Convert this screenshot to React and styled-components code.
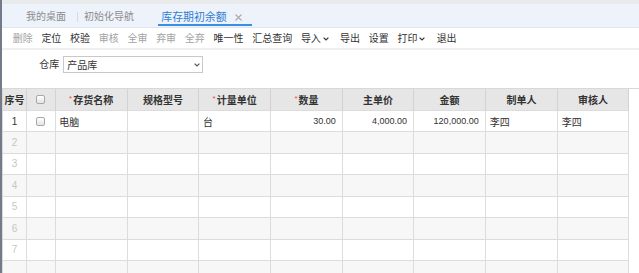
import React from "react";
import styled, { createGlobalStyle } from "styled-components";

const GlobalStyle = createGlobalStyle`
  html, body { margin: 0; padding: 0; height: 100%; overflow: hidden; background: #fff; }
  body { font-family: "Liberation Sans", "Noto Sans CJK SC", sans-serif; font-size: 10px; color: #333; }
  * { box-sizing: border-box; }
`;

const Page = styled.div`
  height: 273px;
  border-left: 2px solid #737b89;
  display: flex;
  flex-direction: column;
  overflow: hidden;
`;

const TopStrip = styled.div`
  height: 4px;
  background: #e9eaec;
  flex: none;
`;

const TabBar = styled.div`
  height: 24px;
  flex: none;
  background: #eef3fb;
  border-bottom: 1px solid #dfe6f0;
  display: flex;
  align-items: flex-start;
  padding-left: 24px;
`;

const Tab = styled.div`
  height: 22px;
  display: flex;
  align-items: center;
  padding: 6px ${(p) => (p.$active ? "9.4px" : "0")} 0 ${(p) => (p.$active ? "3.6px" : "0")};
  margin-left: ${(p) => p.$ml || 0}px;
  border-bottom: 2px solid ${(p) => (p.$active ? "#3a8ee6" : "transparent")};
  color: ${(p) => (p.$active ? "#2f7fd2" : "#8c8c8c")};
  font-size: ${(p) => (p.$active ? "10.9px" : "10px")};
  line-height: 14px;
  white-space: nowrap;
`;

const TabSep = styled.div`
  width: 1px;
  height: 10px;
  margin: 8px 6px 0 11px;
  background: #d5dbe4;
`;

const CloseIcon = styled.svg`
  width: 7px;
  height: 7px;
  margin-left: 8.5px;
`;

const Toolbar = styled.div`
  height: 22px;
  flex: none;
  display: flex;
  align-items: center;
  gap: 8.7px;
  padding-left: 10.7px;
  padding-top: 1px;
  border-bottom: 2px solid #efefef;
`;

const ToolItem = styled.span`
  display: inline-flex;
  align-items: center;
  color: ${(p) => (p.$disabled ? "#a3a3a3" : "#333")};
  font-size: 10px;
  line-height: 14px;
  white-space: nowrap;
  margin-right: ${(p) => (p.$menu ? "2.5px" : "0")};
`;

const Chevron = styled.svg`
  width: 6px;
  height: 4px;
  margin-left: 2px;
`;

const FormRow = styled.div`
  height: 38px;
  flex: none;
  display: flex;
  align-items: flex-start;
  padding: 6px 0 0 37.3px;
`;

const Label = styled.span`
  font-size: 10px;
  line-height: 17px;
  color: #333;
  margin-right: 4px;
`;

const Select = styled.div`
  width: 140px;
  height: 17px;
  border: 1px solid #c9c9c9;
  display: flex;
  align-items: center;
  justify-content: space-between;
  padding: 0 2.5px 0 3px;
  font-size: 10px;
  color: #333;
  background: #fff;
`;

const TableArea = styled.div`
  flex: 1;
  border-top: 1px solid #d8d8d8;
  overflow: hidden;
`;

const cols = "24px 28.6px 72px 71.7px 71.7px 72px 71.3px 71.7px 72px 71.3px";

const Grid = styled.div`
  width: 627px;
  border-left: 1px solid #d8d8d8;
`;

const Row = styled.div`
  display: grid;
  grid-template-columns: ${cols};
  height: ${(p) => p.$h}px;
  background: ${(p) => (p.$head ? "#e6e6e6" : p.$alt ? "#f7f7f7" : "#fff")};
`;

const Cell = styled.div`
  border-right: 1px solid ${(p) => (p.$head ? "#d3d3d3" : "#dcdcdc")};
  border-bottom: 1px solid #dcdcdc;
  display: flex;
  align-items: center;
  justify-content: ${(p) => (p.$align === "right" ? "flex-end" : p.$align === "left" ? "flex-start" : "center")};
  padding: 0 ${(p) => (p.$align === "right" ? "6.3px" : "0")} 0 ${(p) => (p.$align === "left" ? "3.7px" : "0")};
  font-size: ${(p) => (p.$num ? "9px" : "10px")};
  font-weight: ${(p) => (p.$head ? "bold" : "normal")};
  color: ${(p) => (p.$muted ? "#c6c6c6" : "#333")};
  white-space: nowrap;
  overflow: hidden;
`;

const Req = styled.span`
  color: #f04a4a;
  font-size: 8px;
  font-weight: normal;
  align-self: flex-start;
  margin-top: 5px;
  margin-right: 1px;
`;

const Check = styled.span`
  width: 9px;
  height: 9px;
  border: 1px solid #a8a8a8;
  border-radius: 2px;
  background: linear-gradient(#ffffff, #e4e4e4);
`;

const headers = [
  { t: "序号" },
  { t: "", check: true },
  { t: "存货名称", req: true },
  { t: "规格型号" },
  { t: "计量单位", req: true },
  { t: "数量", req: true },
  { t: "主单价" },
  { t: "金额" },
  { t: "制单人" },
  { t: "审核人" },
];

const tools = [
  { t: "删除", d: true },
  { t: "定位" },
  { t: "校验" },
  { t: "审核", d: true },
  { t: "全审", d: true },
  { t: "弃审", d: true },
  { t: "全弃", d: true },
  { t: "唯一性" },
  { t: "汇总查询" },
  { t: "导入", menu: true },
  { t: "导出" },
  { t: "设置" },
  { t: "打印", menu: true },
  { t: "退出" },
];

const ChevronIcon = ({ color = "#333" }) => (
  <Chevron viewBox="0 0 6 4">
    <polyline points="0.6,0.6 3,3 5.4,0.6" fill="none" stroke={color} strokeWidth="1.2" />
  </Chevron>
);

export default function App() {
  const emptyRows = [2, 3, 4, 5, 6, 7, 8];
  return (
    <>
      <GlobalStyle />
      <Page>
        <TopStrip />
        <TabBar>
          <Tab>我的桌面</Tab>
          <TabSep />
          <Tab>初始化导航</Tab>
          <Tab $active $ml={23.7}>
            库存期初余额
            <CloseIcon viewBox="0 0 7 7">
              <path d="M0.5 0.5 L6.5 6.5 M6.5 0.5 L0.5 6.5" stroke="#a9a9a9" strokeWidth="1.1" />
            </CloseIcon>
          </Tab>
        </TabBar>
        <Toolbar>
          {tools.map((it) => (
            <ToolItem key={it.t} $disabled={it.d} $menu={it.menu}>
              {it.t}
              {it.menu && <ChevronIcon />}
            </ToolItem>
          ))}
        </Toolbar>
        <FormRow>
          <Label>仓库</Label>
          <Select>
            <span>产品库</span>
            <ChevronIcon color="#4d5566" />
          </Select>
        </FormRow>
        <TableArea>
          <Grid>
            <Row $head $h={22}>
              {headers.map((h, i) => (
                <Cell key={i} $head>
                  {h.check ? <Check /> : null}
                  {h.req ? <Req>*</Req> : null}
                  {h.t}
                </Cell>
              ))}
            </Row>
            <Row $h={21}>
              <Cell>1</Cell>
              <Cell><Check /></Cell>
              <Cell $align="left">电脑</Cell>
              <Cell />
              <Cell $align="left">台</Cell>
              <Cell $align="right" $num>30.00</Cell>
              <Cell $align="right" $num>4,000.00</Cell>
              <Cell $align="right" $num>120,000.00</Cell>
              <Cell $align="left">李四</Cell>
              <Cell $align="left">李四</Cell>
            </Row>
            {emptyRows.map((n) => (
              <Row key={n} $h={21.5} $alt={n % 2 === 0}>
                <Cell $muted>{n < 8 ? n : ""}</Cell>
                {Array.from({ length: 9 }).map((_, i) => (
                  <Cell key={i} />
                ))}
              </Row>
            ))}
          </Grid>
        </TableArea>
      </Page>
    </>
  );
}
